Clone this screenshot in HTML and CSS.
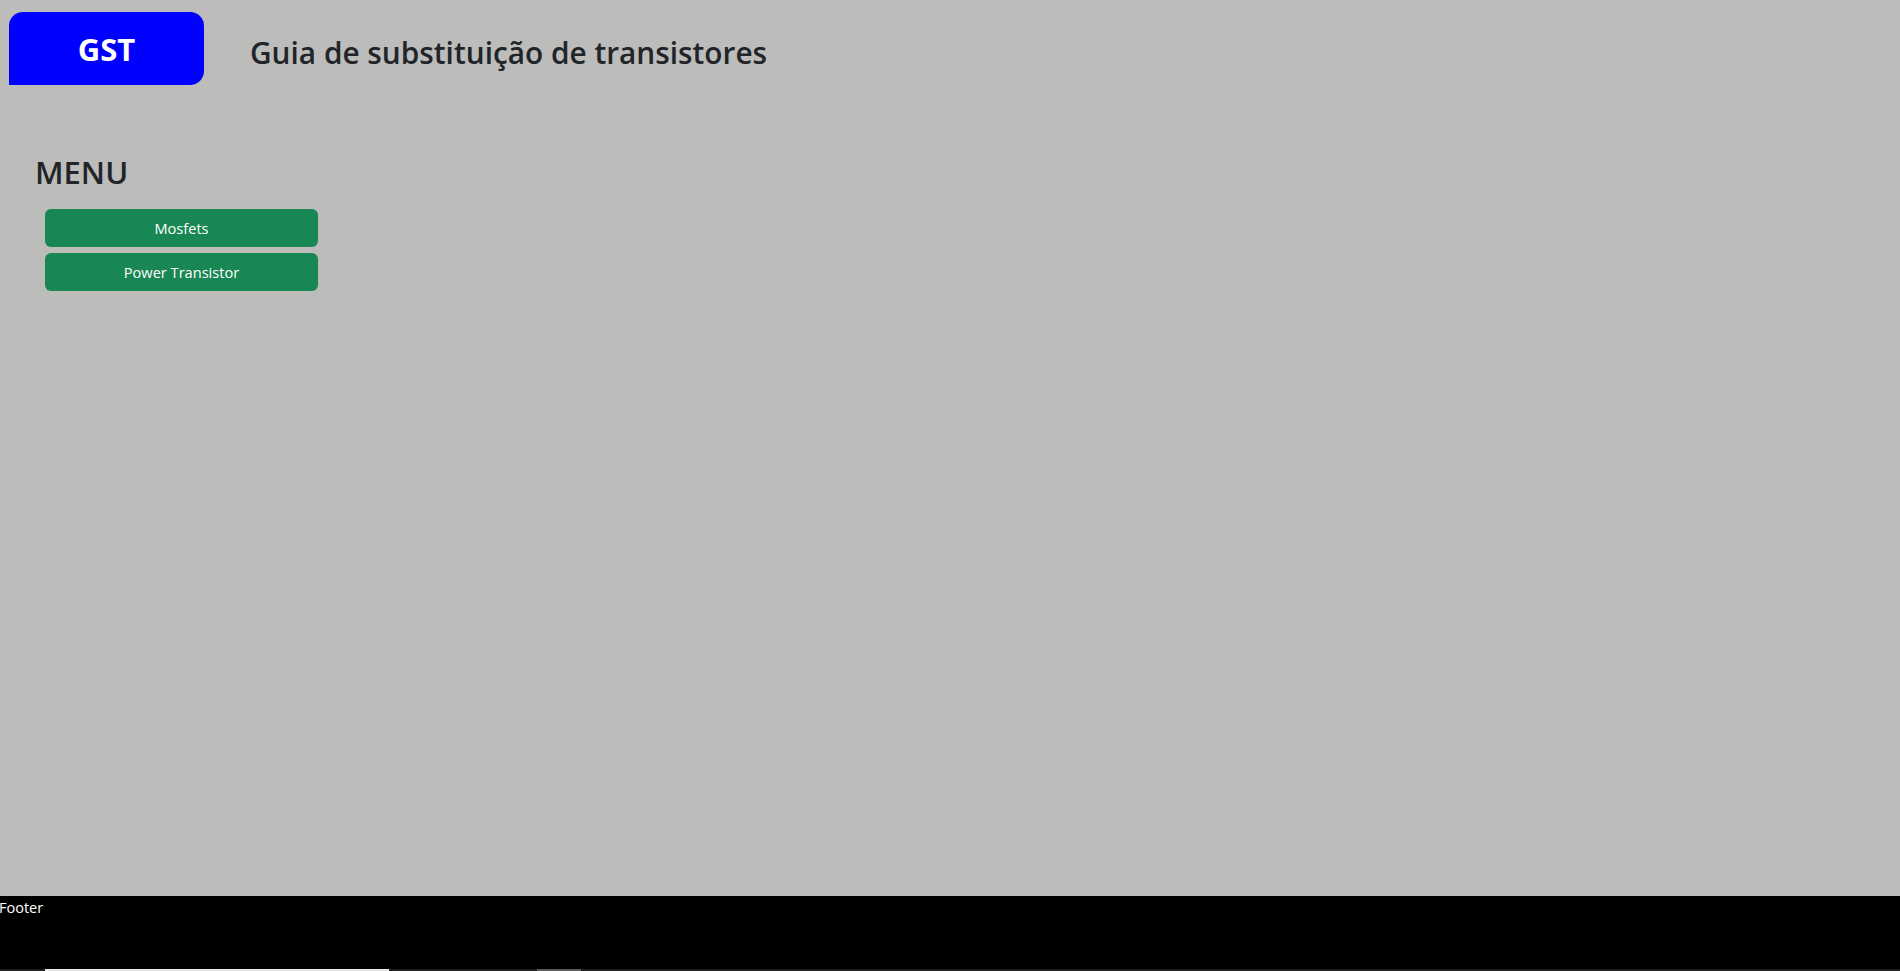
FILE: index.html
```html
<!DOCTYPE html>
<html lang="pt">
<head>
<meta charset="utf-8">
<title>GST</title>
<link rel="stylesheet" href="styles.css">
</head>
<body>
<div class="page">
  <header class="header">
    <div class="logo">GST</div>
    <h1 class="title">Guia de substituição de transistores</h1>
  </header>
  <main class="main">
    <aside class="menu">
      <h2 class="menu-title">MENU</h2>
      <nav class="nav">
        <a class="btn" href="#">Mosfets</a>
        <a class="btn" href="#">Power Transistor</a>
      </nav>
    </aside>
  </main>
  <footer class="footer">
    <div class="footer-text">Footer</div>
    <div class="strip">
      <div class="strip-light"></div>
      <div class="strip-thumb"></div>
    </div>
  </footer>
</div>
</body>
</html>
```
FILE: styles.css
```css
html, body {
  margin: 0;
  padding: 0;
  height: 100%;
  overflow: hidden;
}
body {
  background: #bcbcba;
  color: #212529;
  font-family: "Open Sans", "Noto Sans", sans-serif;
}
.page {
  display: flex;
  flex-direction: column;
  height: 971px;
}
.header {
  display: flex;
  align-items: center;
  padding: 12px 0 0 9px;
}
.logo {
  width: 195px;
  height: 73px;
  background: #0000ff;
  color: #fff;
  font-size: 31px;
  font-weight: 700;
  display: flex;
  align-items: center;
  justify-content: center;
  border-radius: 14px 14px 14px 0;
}
.title {
  margin: 0 0 0 46px;
  font-size: 29.8px;
  font-weight: 600;
  padding-top: 7px;
}
.main {
  flex: 1;
}
.menu {
  padding: 69px 0 0 35px;
}
.menu-title {
  margin: 0;
  font-size: 31px;
  font-weight: 600;
  line-height: 1.2;
}
.nav {
  margin: 18px 0 0 10px;
  width: 273px;
  display: flex;
  flex-direction: column;
  gap: 6px;
}
.btn {
  height: 38px;
  display: flex;
  align-items: center;
  justify-content: center;
  background: #198754;
  color: #fff;
  text-decoration: none;
  border-radius: 6px;
  font-size: 14.6px;
}
.footer {
  height: 75px;
  background: #000;
  color: #fff;
  display: flex;
  flex-direction: column;
}
.footer-text {
  font-size: 14.5px;
  line-height: 24px;
  flex: 1;
  margin-left: -1px;
}
.strip {
  height: 2px;
  background: #1e1e1e;
  display: flex;
}
.strip-light {
  margin-left: 45px;
  width: 344px;
  background: #e6e6e6;
}
.strip-thumb {
  margin-left: 148px;
  width: 44px;
  background: #5a5a5a;
}
```
